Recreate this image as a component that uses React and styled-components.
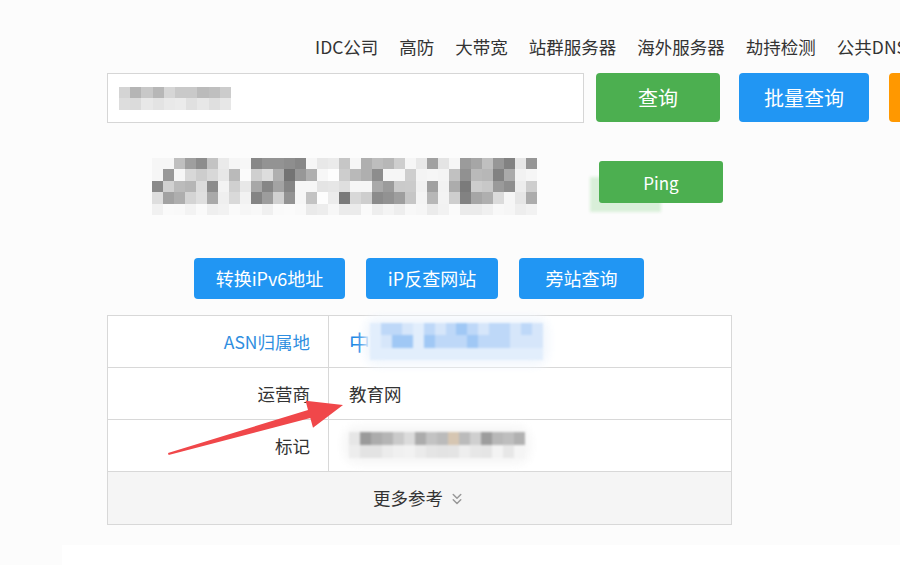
import React from "react";
import styled, { createGlobalStyle } from "styled-components";
import { ChevronsDown } from "lucide-react";

const GlobalStyle = createGlobalStyle`
  html, body {
    margin: 0;
    padding: 0;
    overflow: hidden;
    background: #fcfcfc;
  }
  body {
    font-family: "Noto Sans CJK SC", "Noto Sans", sans-serif;
    color: #333;
  }
`;

const Page = styled.div`
  position: relative;
  width: 900px;
  height: 565px;
  padding-left: 107px;
  box-sizing: border-box;
  overflow: hidden;
`;

const Nav = styled.nav`
  display: flex;
  gap: 21px;
  padding: 34px 0 0 208px;
  height: 39px;
  white-space: nowrap;
  box-sizing: border-box;
  a {
    font-size: 17.5px;
    line-height: 26px;
    color: #333;
    text-decoration: none;
  }
`;

const SearchRow = styled.div`
  display: flex;
  align-items: flex-start;
  margin-top: 34px;
  white-space: nowrap;
`;

const SearchBox = styled.div`
  flex: none;
  width: 477px;
  height: 50px;
  box-sizing: border-box;
  border: 1px solid #d6d6d6;
  background: #fff;
  display: flex;
  align-items: center;
  padding-left: 11px;
  margin-right: 12px;
`;

const colors = {
  green: "#4caf50",
  blue: "#2196f3",
  orange: "#ff9800",
};

const Button = styled.button`
  flex: none;
  width: ${(p) => p.$w}px;
  height: ${(p) => p.$h || 49}px;
  margin-right: ${(p) => p.$gap || 0}px;
  border: none;
  border-radius: 4px;
  background: ${(p) => colors[p.$tone]};
  color: #fff;
  font-family: inherit;
  font-size: ${(p) => p.$size || 20}px;
  padding: 0;
  cursor: pointer;
`;

const IpRow = styled.div`
  display: flex;
  align-items: flex-start;
  margin-top: 35px;
  padding-left: 45px;
`;

const PingWrap = styled.div`
  position: relative;
  margin: 3px 0 0 62px;
`;

const PingSmear = styled.div`
  position: absolute;
  left: -9px;
  top: 16px;
  width: 71px;
  height: 35px;
  background: #d9efd9;
  filter: blur(1.5px);
`;

const PingButton = styled(Button)`
  position: relative;
  border-radius: 3px;
`;

const Tools = styled.div`
  display: flex;
  justify-content: center;
  gap: 21px;
  width: 624px;
  margin-top: 43px;
`;

const Table = styled.table`
  width: 625px;
  margin-top: 16px;
  border-collapse: collapse;
  background: #fff;
  td {
    border: 1px solid #d8d8d8;
    font-size: 17.5px;
    height: 51px;
    padding: 0;
  }
`;

const Label = styled.td`
  width: 202px;
  text-align: right;
  padding-right: 18px !important;
  color: ${(p) => (p.$link ? "#2e8ee0" : "#333")};
`;

const Value = styled.td`
  padding-left: 20px !important;
  color: ${(p) => (p.$link ? "#1e88e5" : "#333")};
`;

const ValueInner = styled.div`
  display: flex;
  align-items: center;
  font-size: ${(p) => p.$size || 17.5}px;
`;

const More = styled.td`
  background: #f5f5f5;
  text-align: center;
  height: 52px !important;
  span {
    display: inline-flex;
    align-items: center;
    gap: 5px;
  }
  svg {
    color: #999;
    margin-top: 2px;
  }
`;

const Lower = styled.div`
  margin: 20px 0 0 -45px;
  height: 40px;
  background: #fff;
`;

const Grid = styled.div`
  display: grid;
  width: max-content;
  grid-template-columns: repeat(${(p) => p.$cols}, ${(p) => p.$cw}px);
  grid-auto-rows: ${(p) => p.$ch}px;
  filter: blur(${(p) => p.$blur || 0.5}px);
  ${(p) => (p.$haze ? `box-shadow: 0 0 10px 6px ${p.$haze}; background: ${p.$haze};` : "")}
  border-radius: ${(p) => p.$round || 0}px;
`;

const Arrow = styled.svg`
  position: absolute;
  left: 0;
  top: 0;
  pointer-events: none;
`;

// small seeded generator so the mosaics stay the same between renders
function rng(seed) {
  let a = seed;
  return () => {
    a |= 0;
    a = (a + 0x6d2b79f5) | 0;
    let t = Math.imul(a ^ (a >>> 15), 1 | a);
    t = (t + Math.imul(t ^ (t >>> 7), 61 | t)) ^ t;
    return ((t ^ (t >>> 14)) >>> 0) / 4294967296;
  };
}

function grayCells(seed, cols, rows, pick) {
  const r = rng(seed);
  const out = [];
  for (let y = 0; y < rows; y++)
    for (let x = 0; x < cols; x++) out.push(pick(r, x, y));
  return out;
}

const g = (v) => `rgb(${v},${v},${v})`;

const ipMask = "11111101011111100111111101011111101";
const ipCells = grayCells(7, 35, 5, (r, x, y) => {
  if (y === 4) return g(234 + Math.floor(r() * 18));
  const ink = ipMask[x] === "1";
  if (!ink) return g(228 + Math.floor(r() * 26));
  if (r() < 0.25) return g(246);
  return g(115 + Math.floor(r() * 110));
});

const inputCells = grayCells(3, 10, 2, (r, x, y) =>
  y === 0 ? g(180 + Math.floor(r() * 45)) : g(218 + Math.floor(r() * 20))
);

const asnCells = grayCells(11, 16, 3, (r, x, y) => {
  if (y === 2 || x === 0 || x === 4) return "rgb(226,238,252)";
  const d = r();
  if (d < 0.3) return "rgb(160,200,245)";
  if (d < 0.6) return "rgb(190,216,248)";
  return "rgb(214,230,250)";
});

const markCells = grayCells(19, 16, 2, (r, x, y) => {
  if (y === 1) return g(226 + Math.floor(r() * 20));
  if (x === 0) return g(230);
  if (x === 9) return "rgb(214,198,178)";
  return g(150 + Math.floor(r() * 70));
});

const Mosaic = ({ cells, cols, cw, ch, blur, haze, round }) => (
  <Grid $cols={cols} $cw={cw} $ch={ch} $blur={blur} $haze={haze} $round={round}>
    {cells.map((c, i) => (
      <div key={i} style={{ background: c }} />
    ))}
  </Grid>
);

const navItems = ["IDC公司", "高防", "大带宽", "站群服务器", "海外服务器", "劫持检测", "公共DNS"];

export default function App() {
  return (
    <>
      <GlobalStyle />
      <Page>
        <Nav>
          {navItems.map((n) => (
            <a key={n} href="#">
              {n}
            </a>
          ))}
        </Nav>

        <SearchRow>
          <SearchBox>
            <Mosaic cells={inputCells} cols={10} cw={11.2} ch={11.5} blur={0.6} />
          </SearchBox>
          <Button $tone="green" $w={124} $gap={19}>
            查询
          </Button>
          <Button $tone="blue" $w={130} $gap={20}>
            批量查询
          </Button>
          <Button $tone="orange" $w={130}>
            工具
          </Button>
        </SearchRow>

        <IpRow>
          <Mosaic cells={ipCells} cols={35} cw={11} ch={11.4} blur={0.7} />
          <PingWrap>
            <PingSmear />
            <PingButton $tone="green" $w={124} $h={42} $size={17}>
              Ping
            </PingButton>
          </PingWrap>
        </IpRow>

        <Tools>
          <Button $tone="blue" $w={151} $h={41} $size={18}>
            转换iPv6地址
          </Button>
          <Button $tone="blue" $w={132} $h={41} $size={18}>
            iP反查网站
          </Button>
          <Button $tone="blue" $w={125} $h={41} $size={18}>
            旁站查询
          </Button>
        </Tools>

        <Table>
          <tbody>
            <tr>
              <Label $link>ASN归属地</Label>
              <Value $link>
                <ValueInner $size={21}>
                  中
                  <Mosaic cells={asnCells} cols={16} cw={10.8} ch={12.5} blur={1} haze="#f2f7fd" round={8} />
                </ValueInner>
              </Value>
            </tr>
            <tr>
              <Label>运营商</Label>
              <Value>教育网</Value>
            </tr>
            <tr>
              <Label>标记</Label>
              <Value>
                <Mosaic cells={markCells} cols={16} cw={11} ch={13} blur={0.8} haze="#f6f6f6" round={8} />
              </Value>
            </tr>
            <tr>
              <More colSpan={2}>
                <span>
                  更多参考
                  <ChevronsDown size={18} strokeWidth={2} />
                </span>
              </More>
            </tr>
          </tbody>
        </Table>

        <Lower />

        <Arrow width="900" height="565" viewBox="0 0 900 565">
          <polygon
            points="168,453 308,410 305.6,400.7 343,405 313,427.7 310.3,418.1 168.6,455"
            fill="#f0474a"
          />
        </Arrow>
      </Page>
    </>
  );
}
